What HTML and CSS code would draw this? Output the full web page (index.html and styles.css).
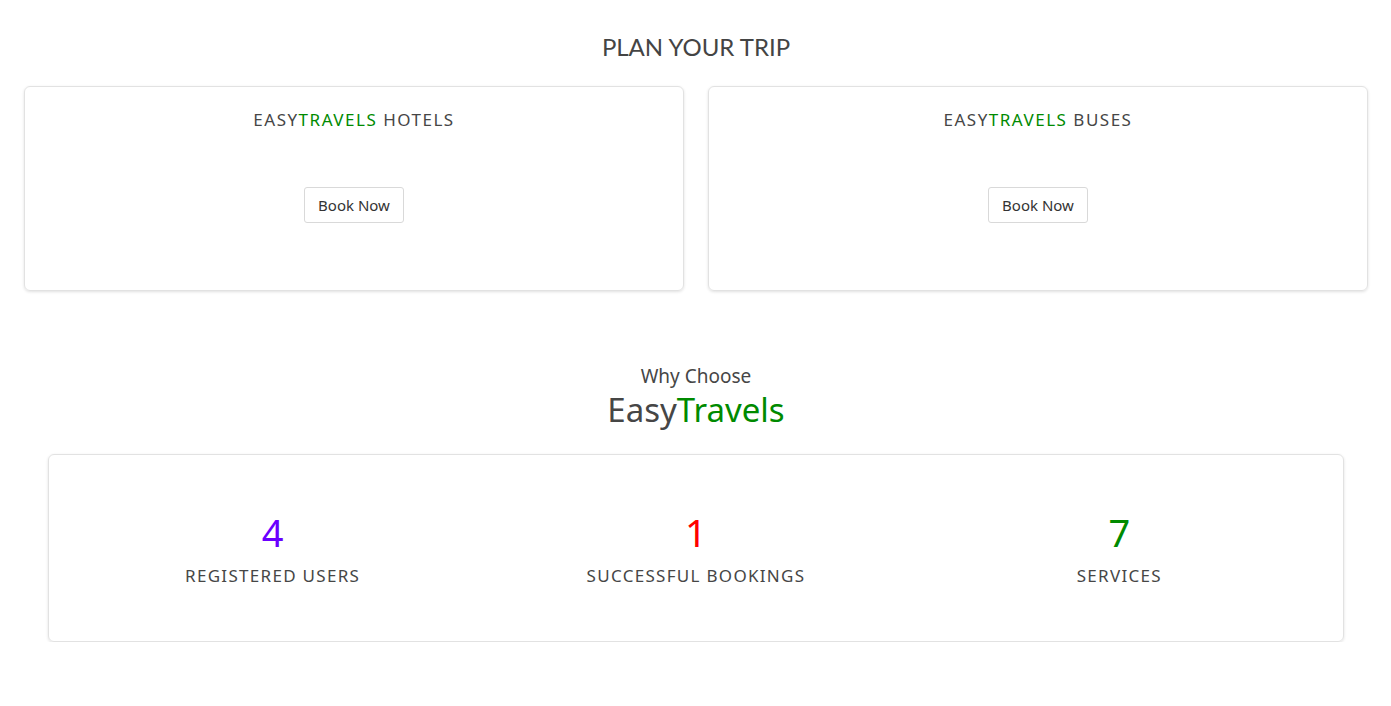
FILE: index.html
```html
<!DOCTYPE html>
<html>
<head>
<meta charset="utf-8">
<link rel="stylesheet" href="styles.css">
</head>
<body>
<section class="plan">
  <h2 class="plan-title">PLAN YOUR TRIP</h2>
  <div class="plan-grid">
    <div class="card">
      <h3 class="card-title">EASY<span class="green">TRAVELS</span> HOTELS</h3>
      <button class="btn">Book Now</button>
    </div>
    <div class="card">
      <h3 class="card-title">EASY<span class="green">TRAVELS</span> BUSES</h3>
      <button class="btn">Book Now</button>
    </div>
  </div>
</section>
<section class="why">
  <div class="why-small">Why Choose</div>
  <div class="why-big">Easy<span class="green">Travels</span></div>
  <div class="stats">
    <div class="stat">
      <div class="num purple">4</div>
      <div class="label">REGISTERED USERS</div>
    </div>
    <div class="stat">
      <div class="num red">1</div>
      <div class="label">SUCCESSFUL BOOKINGS</div>
    </div>
    <div class="stat">
      <div class="num green">7</div>
      <div class="label">SERVICES</div>
    </div>
  </div>
</section>
</body>
</html>
```
FILE: styles.css
```css
* { box-sizing: border-box; }
html, body { margin: 0; padding: 0; background: #fff; }
body {
  font-family: "Noto Sans", "Open Sans", sans-serif;
  color: #464646;
}
.green { color: #008a00; }
.purple { color: #6a00ff; }
.red { color: #ff0000; }

.plan { padding: 32px 23px 0 24px; }
.plan-title {
  margin: 0;
  text-align: center;
  font-family: "Lato", sans-serif;
  font-weight: 400;
  font-size: 24px;
  line-height: 30px;
  color: #444;
}
.plan-grid {
  display: grid;
  grid-template-columns: 1fr 1fr;
  gap: 24px;
  margin-top: 24px;
}
.card {
  height: 205px;
  border: 1px solid #e2e2e2;
  border-radius: 6px;
  box-shadow: 0 1px 3px rgba(0,0,0,0.12);
  display: flex;
  flex-direction: column;
  align-items: center;
  padding-top: 22px;
}
.card-title {
  margin: 0;
  font-weight: 400;
  font-size: 17px;
  letter-spacing: 1.5px;
  line-height: 22px;
}
.btn {
  margin-top: 56px;
  width: 100px;
  height: 36px;
  background: #fff;
  border: 1px solid #d9d9d9;
  border-radius: 3px;
  font-family: "Noto Sans", sans-serif;
  font-size: 15px;
  color: #333;
  padding: 0;
}

.why { padding: 73px 47px 0 48px; text-align: center; }
.why-small { font-size: 19px; line-height: 24px; color: #464646; }
.why-big { font-size: 33px; line-height: 40px; margin-top: 2px; color: #464646; }
.stats {
  margin-top: 24px;
  height: 188px;
  border: 1px solid #e2e2e2;
  border-radius: 6px;
  box-shadow: 0 1px 3px rgba(0,0,0,0.12);
  display: grid;
  grid-template-columns: 1fr 1fr 1fr;
  padding: 0 12px;
  align-items: center;
}
.stat { display: flex; flex-direction: column; align-items: center; padding-bottom: 0; }
.num { font-size: 38px; line-height: 46px; }
.label { font-size: 17px; letter-spacing: 1.3px; line-height: 22px; margin-top: 10px; }
```
